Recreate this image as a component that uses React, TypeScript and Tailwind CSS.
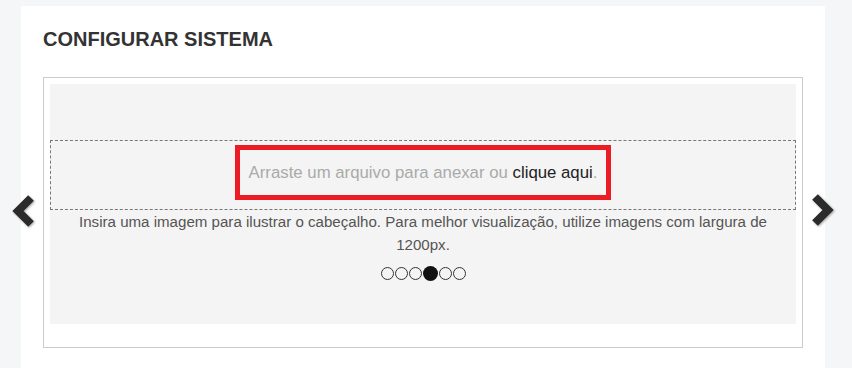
const DOTS = [false, false, false, true, false, false];

function Chevron({ dir }: { dir: "left" | "right" }) {
  const points = dir === "left" ? "31,12 18,25 31,38" : "10,12 23,25 10,38";
  return (
    <svg
      width="40"
      height="50"
      viewBox="0 0 40 50"
      className="[filter:drop-shadow(1px_1px_1px_rgba(0,0,0,0.35))]"
    >
      <polyline points={points} fill="none" stroke="#2b2b2b" strokeWidth="8" strokeLinejoin="miter" />
    </svg>
  );
}

export default function App() {
  return (
    <div className="relative min-h-screen bg-[#f5f6f8] pt-[6px] pl-[21px] font-['Liberation_Sans',Arial,sans-serif]">
      <div className="h-[362px] w-[804px] bg-white pl-[22px] pt-[21px]">
        <h1 className="text-[20px] font-bold leading-[24px] text-[#333]">CONFIGURAR SISTEMA</h1>

        <div className="mt-[26px] w-[760px] border border-[#cccccc] px-[6px] pt-[6px] pb-[23px]">
          <div className="h-[240px] bg-[#f4f4f4] pt-[56px]">
            <div className="flex justify-center border border-dashed border-[#777] pt-[4px] pb-[9px]">
              <div className="border-[5px] border-[#ed1c24] px-[9px] py-[12px] text-[16.8px] leading-[21px] text-[#aaaaaa]">
                Arraste um arquivo para anexar ou <span className="text-[#222]">clique aqui</span>.
              </div>
            </div>
            <p className="px-[24px] text-center text-[15.1px] leading-[23px] text-[#555]">
              Insira uma imagem para ilustrar o cabeçalho. Para melhor visualização, utilize imagens com largura de
              1200px.
            </p>
            <div className="mt-[10px] flex items-center justify-center gap-[1px]">
              {DOTS.map((active, i) =>
                active ? (
                  <span key={i} className="h-[15px] w-[15px] rounded-full bg-[#111]" />
                ) : (
                  <span key={i} className="h-[13px] w-[13px] rounded-full border-[1.5px] border-[#333]" />
                )
              )}
            </div>
          </div>
        </div>
      </div>

      <div className="absolute left-0 top-[186px]">
        <Chevron dir="left" />
      </div>
      <div className="absolute left-[805px] top-[185px]">
        <Chevron dir="right" />
      </div>
    </div>
  );
}
